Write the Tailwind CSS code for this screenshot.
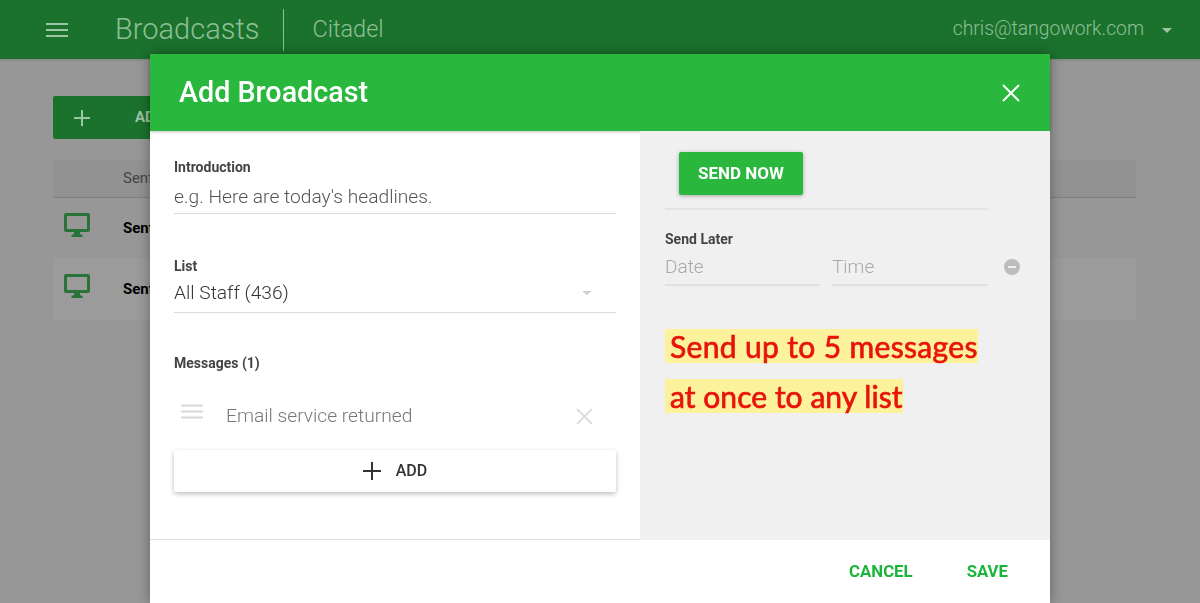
<!DOCTYPE html>
<html lang="en">
<head>
  <meta charset="UTF-8" />
  <title>Add Broadcast</title>
  <script src="https://cdn.jsdelivr.net/npm/@tailwindcss/browser@4"></script>
</head>
<body class="h-screen overflow-hidden bg-[#979797] font-['Roboto',sans-serif]">
  <!-- Page behind the dialog -->
  <header class="flex h-[59px] items-center bg-[#1b722c] text-[#8fbf97] shadow">
    <svg class="ml-[46px] h-[16px] w-[22px]" viewBox="0 0 22 16" fill="none" stroke="#9cc6a3" stroke-width="2"><path d="M0 2h22M0 8h22M0 14h22" /></svg>
    <span class="ml-[47px] text-[29px] font-light">Broadcasts</span>
    <span class="ml-[24px] h-[42px] w-px bg-[#8fbf97]"></span>
    <span class="ml-[28px] text-[23.500px] font-light">Citadel</span>
    <span class="ml-auto text-[19.300px] font-light">chris@tangowork.com</span>
    <span class="ml-[18px] mr-[28px] mt-[2px] h-0 w-0 border-x-[5px] border-t-[5px] border-x-transparent border-t-[#9cc6a3]"></span>
  </header>
  <main class="ml-[53px] mr-[64px] pt-[37px]">
    <div class="flex h-[43px] w-[200px] items-center rounded-[2px] bg-[#1b722c] pl-[21px] text-[#9cc6a3]">
      <svg class="h-[16px] w-[16px]" viewBox="0 0 16 16" fill="none" stroke="currentColor" stroke-width="2"><path d="M8 0v16M0 8h16" /></svg>
      <span class="ml-[45px] text-[15px] font-bold">ADD</span>
    </div>
    <div class="mt-[21px] flex h-[38px] items-center border-b border-[#7f7f7f] bg-[#929292] pl-[70px] text-[15px] text-[#444]">Sent</div>
    <div class="flex h-[60px] items-center pl-[11px]">
      <svg class="-mt-[6px] h-[24px] w-[26px]" viewBox="0 0 26 24" fill="#2a7338"><path fill-rule="evenodd" d="M2 0h22a2 2 0 0 1 2 2v15a2 2 0 0 1-2 2h-8v2l2.500 1v2h-11v-2l2.500-1v-2H2a2 2 0 0 1-2-2V2a2 2 0 0 1 2-2Zm1 3v13h20V3Z" /></svg>
      <span class="ml-[33px] text-[15px] font-bold text-black">Sent</span>
    </div>
    <div class="flex h-[62px] items-center bg-[#9b9b9b] pl-[11px]">
      <svg class="-mt-[6px] h-[24px] w-[26px]" viewBox="0 0 26 24" fill="#2a7338"><path fill-rule="evenodd" d="M2 0h22a2 2 0 0 1 2 2v15a2 2 0 0 1-2 2h-8v2l2.500 1v2h-11v-2l2.500-1v-2H2a2 2 0 0 1-2-2V2a2 2 0 0 1 2-2Zm1 3v13h20V3Z" /></svg>
      <span class="ml-[33px] text-[15px] font-bold text-black">Sent</span>
    </div>
  </main>

  <!-- Dialog -->
  <section class="fixed left-[150px] top-[54px] flex h-[549px] w-[900px] flex-col rounded-t-[2px] bg-white shadow-[0_0_14px_rgba(0,0,0,0.35)]">
    <div class="flex h-[77px] shrink-0 items-center justify-between bg-[#29b73e] pl-[29px] pr-[30px] text-white shadow-[0_1px_3px_rgba(0,0,0,0.25)]">
      <h1 class="pt-[1px] text-[28.700px] font-medium">Add Broadcast</h1>
      <svg class="h-[18px] w-[18px]" viewBox="0 0 18 18" fill="none" stroke="white" stroke-width="2"><path d="M1 1l16 16M17 1L1 17" /></svg>
    </div>
    <div class="flex h-[409px] shrink-0">
      <div class="w-[490px] border-b border-[#dedede] pl-[24px] pr-[24px] pt-[27px]">
        <label class="block text-[14px] leading-[18px] font-bold text-[#444]">Introduction</label>
        <div class="mt-[5px] flex h-[33px] items-center border-b border-[#dcdcdc] text-[19.200px] font-light text-[#555]">e.g. Here are today's headlines.</div>
        <label class="mt-[43px] block text-[14px] leading-[18px] font-bold text-[#444]">List</label>
        <div class="mt-[4px] flex h-[34px] items-center justify-between border-b border-[#dcdcdc] pb-[5px] text-[19.200px] font-light text-[#333]">
          All Staff (436)
          <span class="mr-[24px] h-0 w-0 border-x-[5px] border-t-[4px] border-x-transparent border-t-[#d0d0d0]"></span>
        </div>
        <label class="mt-[41px] block text-[14px] leading-[18px] font-bold text-[#444]">Messages (1)</label>
        <div class="mt-[20px] flex h-[48px] items-center pl-[7px] pr-[23px]">
          <svg class="-mt-[10px] h-[15px] w-[22px]" viewBox="0 0 22 15" fill="none" stroke="#d8d8d8" stroke-width="2"><path d="M0 1.500h22M0 7.500h22M0 13.500h22" /></svg>
          <span class="ml-[23px] text-[19.200px] font-light text-[#777]">Email service returned</span>
          <svg class="ml-auto h-[17px] w-[17px]" viewBox="0 0 17 17" fill="none" stroke="#dedede" stroke-width="2"><path d="M1 1l15 15M16 1L1 16" /></svg>
        </div>
        <button class="mt-[10px] flex h-[42px] w-full items-center justify-center gap-[15px] rounded-[2px] bg-white text-[#333] shadow-[0_2px_5px_rgba(0,0,0,0.25)]">
          <svg class="h-[18px] w-[18px]" viewBox="0 0 18 18" fill="none" stroke="#333" stroke-width="2"><path d="M9 0v18M0 9h18" /></svg>
          <span class="text-[16px] font-medium">ADD</span>
        </button>
      </div>
      <div class="flex-1 bg-[#f0f0f0] pl-[25px] pt-[21px]">
        <button class="ml-[14px] h-[43px] w-[124px] rounded-[2px] bg-[#29b73e] text-[17px] font-bold text-white shadow-[0_1px_4px_rgba(0,0,0,0.3)]">SEND NOW</button>
        <div class="mt-[13px] h-[2px] w-[323px] bg-[#e4e4e4]"></div>
        <label class="mt-[20px] block text-[14px] leading-[18px] font-bold text-[#444]">Send Later</label>
        <div class="mt-[3px] flex items-center">
          <div class="flex h-[35px] w-[155px] items-center border-b-2 border-[#e0e0e0] text-[19px] font-light text-[#a8a8a8]">Date</div>
          <div class="ml-[12px] flex h-[35px] w-[156px] items-center border-b-2 border-[#e0e0e0] text-[19px] font-light text-[#a8a8a8]">Time</div>
          <span class="-mt-[4px] ml-[16px] flex h-[16px] w-[16px] items-center justify-center rounded-full bg-[#bdbdbd]"><span class="h-[2px] w-[8px] bg-[#eee]"></span></span>
        </div>
        <p class="mt-[43px] flex flex-col items-start gap-[16px] font-['Lato',sans-serif] text-[30px] leading-[34px] text-[#e8140c] [-webkit-text-stroke:0.7px_#e8140c]">
          <span class="bg-[#fdf29c] pl-[5px] tracking-[0.35px]">Send up to 5 messages</span>
          <span class="bg-[#fdf29c] pl-[5px] tracking-[0.05px]">at once to any list</span>
        </p>
      </div>
    </div>
    <div class="flex flex-1 items-center justify-end gap-[54px] pr-[42px] pt-[1px] text-[16.800px] font-bold text-[#1cb53c]">
      <button>CANCEL</button>
      <button>SAVE</button>
    </div>
  </section>
</body>
</html>
